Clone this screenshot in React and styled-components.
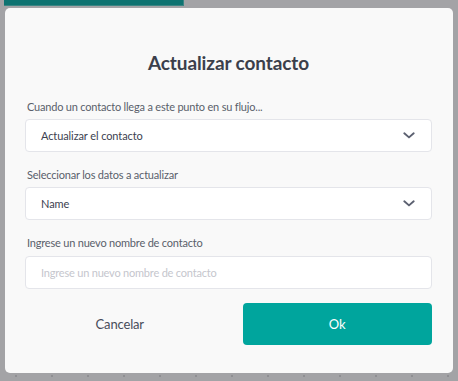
import React from "react";
import styled, { createGlobalStyle } from "styled-components";

const Global = createGlobalStyle`
  html, body { margin: 0; padding: 0; }
  body {
    width: 458px;
    height: 381px;
    overflow: hidden;
    font-family: Lato, "Open Sans", sans-serif;
    background-color: #a3a3a6;
    background-image: radial-gradient(circle, #8f8f93 1px, transparent 1.3px);
    background-size: 36px 36px;
    background-position: -2px 358px;
  }
`;

const Screen = styled.div`
  width: 458px;
  height: 381px;
  display: flex;
  flex-direction: column;
`;

const TopBar = styled.div`
  margin-left: 4px;
  width: 180px;
  height: 6px;
  background: #0e7371;
  border-right: 1px solid #3a8583;
  border-bottom: 1px solid #3a8583;
  box-sizing: border-box;
`;

const Dialog = styled.div`
  margin: 2px 0 0 5px;
  width: 448px;
  height: 365px;
  box-sizing: border-box;
  background: #f9f9f9;
  border-radius: 5px;
  padding: 43px 21px 0 20px;
  display: flex;
  flex-direction: column;
`;

const Title = styled.h1`
  margin: 0;
  font-size: 19px;
  letter-spacing: -0.1px;
  font-weight: 700;
  color: #3b3f4b;
  text-align: center;
  line-height: 24px;
`;

const Field = styled.div`
  display: flex;
  flex-direction: column;
  margin-top: ${(p) => p.$mt}px;
`;

const Label = styled.label`
  font-size: 11px;
  letter-spacing: -0.2px;
  line-height: 15px;
  color: #5a5f6b;
  padding-left: 2px;
  margin-bottom: ${(p) => p.$mb ?? 5}px;
`;

const Select = styled.div`
  height: 33px;
  box-sizing: border-box;
  background: #ffffff;
  border: 1px solid #e4e5ea;
  border-radius: 4px;
  display: flex;
  align-items: center;
  justify-content: space-between;
  padding: 0 16px 0 15px;
  font-size: 11px;
  letter-spacing: -0.1px;
  color: #3c4150;
`;

const Input = styled.input`
  height: 33px;
  box-sizing: border-box;
  background: #ffffff;
  border: 1px solid #e4e5ea;
  border-radius: 4px;
  padding: 0 15px;
  font-family: Lato, "Open Sans", sans-serif;
  font-size: 11px;
  letter-spacing: -0.2px;
  color: #3c4150;
  outline: none;
  &::placeholder { color: #c5c6cd; }
`;

const Actions = styled.div`
  margin-top: 14px;
  display: grid;
  grid-template-columns: 1fr 1fr;
  column-gap: 28px;
  align-items: center;
`;

const CancelButton = styled.button`
  background: none;
  border: none;
  font-family: Lato, "Open Sans", sans-serif;
  font-size: 13px;
  letter-spacing: -0.15px;
  color: #474c5a;
  height: 42px;
  padding: 0;
  text-align: center;
`;

const OkButton = styled.button`
  height: 42px;
  border: none;
  border-radius: 4px;
  background: #00a59d;
  color: #ffffff;
  font-family: Lato, "Open Sans", sans-serif;
  font-size: 13px;
  padding: 0;
`;

const Chevron = () => (
  <svg width="12" height="7" viewBox="0 0 12 7" fill="none">
    <path d="M1.3 1.3 L6 5.4 L10.7 1.3" stroke="#5b6070" strokeWidth="1.9" strokeLinecap="round" strokeLinejoin="round" />
  </svg>
);

export default function App() {
  return (
    <Screen>
      <Global />
      <TopBar />
      <Dialog>
        <Title>Actualizar contacto</Title>
        <Field $mt={24}>
          <Label>Cuando un contacto llega a este punto en su flujo...</Label>
          <Select>
            <span>Actualizar el contacto</span>
            <Chevron />
          </Select>
        </Field>
        <Field $mt={15}>
          <Label>Seleccionar los datos a actualizar</Label>
          <Select>
            <span>Name</span>
            <Chevron />
          </Select>
        </Field>
        <Field $mt={15}>
          <Label $mb={6}>Ingrese un nuevo nombre de contacto</Label>
          <Input placeholder="Ingrese un nuevo nombre de contacto" />
        </Field>
        <Actions>
          <CancelButton>Cancelar</CancelButton>
          <OkButton>Ok</OkButton>
        </Actions>
      </Dialog>
    </Screen>
  );
}
